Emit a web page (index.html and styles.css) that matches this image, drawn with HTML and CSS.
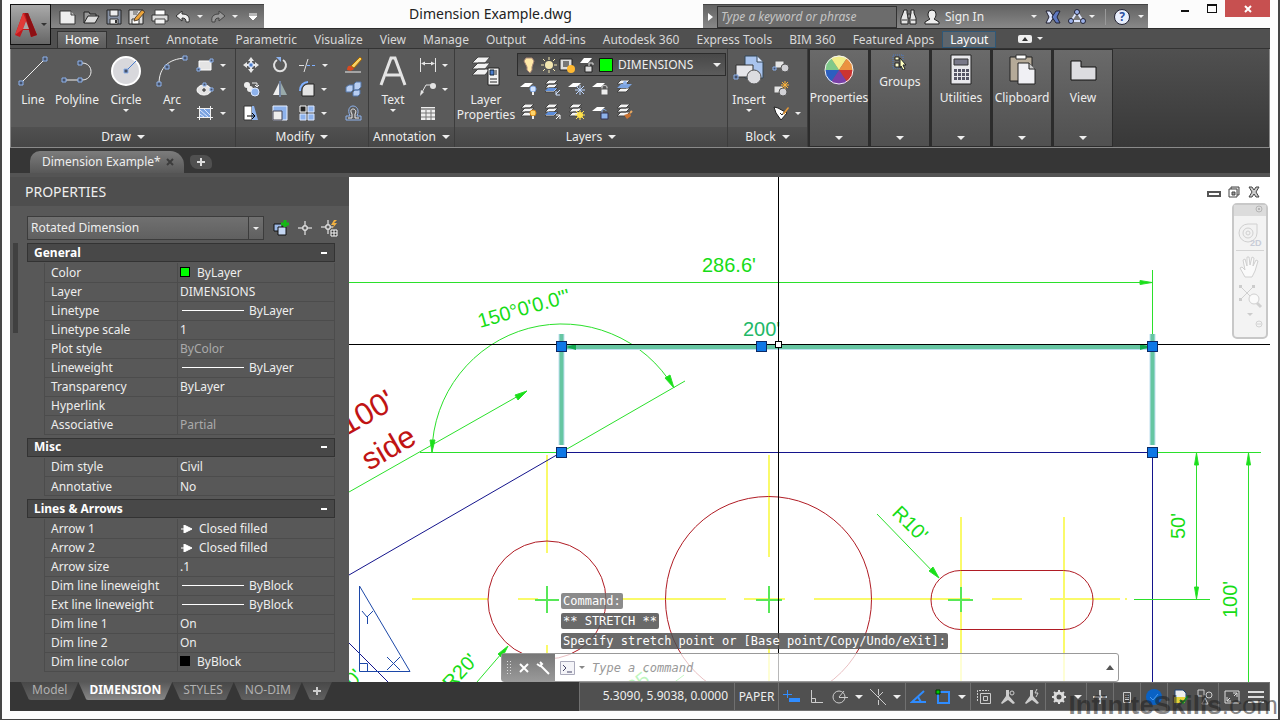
FILE: index.html
```html
<!DOCTYPE html>
<html lang="en">
<head>
    <meta charset="utf-8">
    <title>Dimension Example.dwg</title>
    <link rel="stylesheet" href="styles.css">
</head>
<body>
<div class="window">
    <header class="titlebar">
        <button class="app-button" aria-label="Application menu">
            <svg width="24" height="26" viewBox="0 0 24 26"><path d="M9 1h5l9 22-6 2-2-7H9l-3 7-5-2z" fill="#c2181c"/><path d="M11 1l3 0 9 22-6 2z" fill="#8d1014"/><path d="M9 1L1 23l8-6 3-9z" fill="#e03a38"/><path d="M12 9l3 8H9z" fill="#a9a9a9"/></svg>
            <span class="caret dark"></span>
        </button>
        <div class="quickbar">
            <button aria-label="New"><svg width="18" height="16" viewBox="0 0 18 16"><path d="M1 2h11l4 4v9H1z" fill="#eee" stroke="#333"/><path d="M12 2v4h4" fill="#bbb" stroke="#444"/></svg></button>
            <button aria-label="Open"><svg width="18" height="16" viewBox="0 0 18 16"><path d="M2 14V3h5l1 2h6v3" fill="#999" stroke="#222"/><path d="M2 14l4-7h11l-4 7z" fill="#ddd" stroke="#222"/></svg></button>
            <button aria-label="Save"><svg width="16" height="16" viewBox="0 0 16 16"><path d="M1 1h14v14H1z" fill="#8791a3" stroke="#222"/><path d="M4 1h8v6H4zM4 10h8v5H4z" fill="#eee" stroke="#333"/><path d="M9 11h2v3H9z" fill="#333"/></svg></button>
            <button aria-label="Save as"><svg width="18" height="16" viewBox="0 0 18 16"><path d="M1 1h14v14H1z" fill="#ddd" stroke="#222"/><path d="M4 10h7v5H4z" fill="#fff" stroke="#333"/><path d="M5 3h5M5 5h4" stroke="#555"/><path d="M7 9l7-8 3 2-7 8-4 1z" fill="#eca43a" stroke="#543"/></svg></button>
            <button aria-label="Print"><svg width="18" height="16" viewBox="0 0 18 16"><path d="M4 1h10v6H4z" fill="#fff" stroke="#444"/><path d="M1 6h16v6H1z" fill="#ddd" stroke="#333"/><path d="M4 10h10v5H4z" fill="#f5f5f5" stroke="#444"/></svg></button>
            <button aria-label="Undo"><svg width="16" height="14" viewBox="0 0 16 14"><path d="M7 1v3c6 0 8 3 7 8h-3c0-3-1-4-4-4v3L1 6z" fill="#eee" stroke="#333"/></svg></button>
            <span class="caret"></span>
            <button aria-label="Redo"><svg width="16" height="14" viewBox="0 0 16 14"><path d="M9 1v3C3 4 1 7 2 12h3c0-3 1-4 4-4v3l6-5z" fill="#999" stroke="#444"/></svg></button>
            <span class="caret"></span>
            <button aria-label="Customize"><svg width="10" height="8" viewBox="0 0 10 8"><path d="M1 1h8M1 3h8L5 7z" stroke="#fff" fill="#fff"/></svg></button>
        </div>
        <div class="doc-title">Dimension Example.dwg</div>
        <div class="infocenter">
            <button class="expander" aria-label="Collapse search"><svg width="5" height="8" viewBox="0 0 5 8"><path d="M0 0l5 4-5 4z" fill="#fff"/></svg></button>
            <input type="text" class="search" placeholder="Type a keyword or phrase" aria-label="Search help">
            <button aria-label="Search"><svg width="18" height="16" viewBox="0 0 18 16"><path d="M4 1h3v3l1 4v7H1V9l2-5zM11 1h3v3l2 5v6h-6V8l1-4z" fill="#e6e6e6" stroke="#222"/><path d="M8 5h2v4H8zM2 11h5M11 11h5" stroke="#333" fill="#ccc"/></svg></button>
            <button class="sign-in"><svg width="16" height="16" viewBox="0 0 16 16"><path d="M4 5a4 4 0 0 1 8 0c0 3-1 4-2 5l5 3v2H1v-2l5-3C5 9 4 8 4 5z" fill="#eee" stroke="#222"/></svg>Sign In</button>
            <span class="caret"></span>
            <button class="exchange" aria-label="Exchange apps"><svg width="16" height="14" viewBox="0 0 16 14"><path d="M1 1h4l4 6-4 6H1l3-6z" fill="#dde6ff" stroke="#223"/><path d="M15 1h-4L7 7l4 6h4l-3-6z" fill="#5e78c0" stroke="#223"/></svg></button>
            <button aria-label="Stay connected"><svg width="18" height="15" viewBox="0 0 18 15"><path d="M9 3l6 9H3z" fill="none" stroke="#dde6ff" stroke-width="2"/><circle cx="9" cy="3" r="2.500" fill="#9ab0e8" stroke="#223"/><circle cx="3" cy="12" r="2.500" fill="#9ab0e8" stroke="#223"/><circle cx="15" cy="12" r="2.500" fill="#9ab0e8" stroke="#223"/></svg></button>
            <span class="caret"></span>
            <span class="divider"></span>
            <button class="help" aria-label="Help">?</button>
            <span class="caret"></span>
        </div>
        <div class="window-controls">
            <button aria-label="Minimize"><svg width="10" height="10" viewBox="0 0 10 10"><path d="M1 8h8" stroke="#111" stroke-width="2"/></svg></button>
            <button aria-label="Maximize"><svg width="10" height="9" viewBox="0 0 10 9"><path d="M0 1h10M0 8.500h10M.5 0v9M9.500 0v9" stroke="#111"/><path d="M0 1h10" stroke="#111" stroke-width="2"/></svg></button>
            <button class="close" aria-label="Close"><svg width="8" height="8" viewBox="0 0 8 8"><path d="M1 1l6 6M7 1L1 7" stroke="#fff" stroke-width="2"/></svg></button>
        </div>
    </header>

    <nav class="ribbon-tabs">
        <a href="#" class="active">Home</a>
        <a href="#">Insert</a>
        <a href="#">Annotate</a>
        <a href="#">Parametric</a>
        <a href="#">Visualize</a>
        <a href="#">View</a>
        <a href="#">Manage</a>
        <a href="#">Output</a>
        <a href="#">Add-ins</a>
        <a href="#">Autodesk 360</a>
        <a href="#">Express Tools</a>
        <a href="#">BIM 360</a>
        <a href="#">Featured Apps</a>
        <a href="#" class="context">Layout</a>
        <button class="ribbon-toggle" aria-label="Minimize ribbon"><svg width="14" height="8" viewBox="0 0 14 8"><rect width="14" height="8" rx="2" fill="#eee"/><path d="M4 6l3-4 3 4z" fill="#333"/></svg></button>
        <span class="caret"></span>
    </nav>

    <section class="ribbon">
        <div class="panel">
            <div class="tools draw">
                <button class="big"><svg width="32" height="32" viewBox="0 0 32 32"><path d="M4 28L28 4" stroke="#eee"/><g class="node"><path d="M2 26h4v4H2zM26 2h4v4h-4z"/></g></svg>Line</button>
                <button class="big"><svg width="32" height="32" viewBox="0 0 32 32"><path d="M3 25h18c12 0 12-17 0-17h-1" fill="none" stroke="#eee"/><g class="node"><path d="M1 23h4v4H1zM17 23h4v4h-4zM17 6h4v4h-4z"/></g></svg>Polyline</button>
                <button class="big"><svg width="32" height="32" viewBox="0 0 32 32"><circle cx="16" cy="16" r="14" fill="#d8d8dc" stroke="#fff" stroke-width="2"/><path d="M16 16L26 6" stroke="#4a7ccc"/><path class="node" d="M14 14h4v4h-4z"/></svg>Circle<span class="caret"></span></button>
                <button class="big"><svg width="32" height="32" viewBox="0 0 32 32"><path d="M3 29C3 12 13 4 29 3" fill="none" stroke="#eee"/><g class="node"><path d="M1 27h4v4H1zM9 10h4v4H9zM27 1h4v4h-4z"/></g></svg>Arc<span class="caret"></span></button>
                <div class="stack">
                    <div class="split"><button aria-label="Rectangle"><svg width="18" height="16" viewBox="0 0 18 16"><path d="M3 4h12v9H3z" fill="#e4e4e4" stroke="#fff"/><g class="node"><path d="M1 11h3v3H1zM14 2h3v3h-3z"/></g></svg></button><span class="caret"></span></div>
                    <div class="split"><button aria-label="Ellipse"><svg width="18" height="16" viewBox="0 0 18 16"><ellipse cx="8" cy="9" rx="7" ry="5" fill="#e4e4e4" stroke="#fff"/><path d="M6 9h4M8 7v4" stroke="#222"/><g class="node"><path d="M7 2h3v3H7zM14 7h3v3h-3z"/></g></svg></button><span class="caret"></span></div>
                    <div class="split"><button aria-label="Hatch"><svg width="18" height="16" viewBox="0 0 18 16"><path d="M4 4h10v8H4z" fill="#7ba3e0"/><path d="M4 5l8 7M8 4l6 6M4 9l4 3" stroke="#dce8ff"/><path d="M1 3.500h16M1 12.500h16M3.500 1v14M14.500 1v14" stroke="#f0f0f0"/></svg></button><span class="caret"></span></div>
                </div>
            </div>
            <button class="panel-title">Draw <span class="caret large"></span></button>
        </div>

        <div class="panel">
            <div class="tools modify">
                <div class="stack">
                    <button aria-label="Move"><svg width="16" height="16" viewBox="0 0 16 16"><path d="M8 0l3 4H9v3h3V5l4 3-4 3V9H9v3h2l-3 4-3-4h2V9H4v2L0 8l4-3v2h3V4H5z" fill="#e8e8e8"/><path d="M6 6h4v4H6z" fill="#4a7ccc" stroke="#dce8ff"/></svg></button>
                    <button aria-label="Copy"><svg width="17" height="16" viewBox="0 0 17 16"><circle cx="4" cy="4" r="3" fill="#eee"/><circle cx="7" cy="8" r="3" fill="#eee"/><circle cx="12" cy="11" r="4" fill="#8db2ec" stroke="#dce8ff"/><path d="M9 2h5v4M12 4l2 2 2-2" fill="none" stroke="#eee"/></svg></button>
                    <button aria-label="Stretch"><svg width="16" height="16" viewBox="0 0 16 16"><path d="M1 1h8v14H1z" fill="#fff" stroke="#333"/><path d="M9 1h2l4 14H9z" fill="#8db2ec"/><path d="M4 11h7M9 8l3 3-3 3" stroke="#000" fill="none"/></svg></button>
                </div>
                <div class="stack">
                    <button aria-label="Rotate"><svg width="16" height="16" viewBox="0 0 16 16"><path d="M11 3a6 6 0 1 1-6 0" fill="none" stroke="#e0e0e0" stroke-width="2"/><path d="M4 0h5v5z" fill="#8db2ec"/></svg></button>
                    <button aria-label="Mirror"><svg width="16" height="16" viewBox="0 0 16 16"><path d="M7 2v12H1z" fill="#eee"/><path d="M9 2v12h6z" fill="#9aa"/><path d="M8 0v16" stroke="#8db2ec"/></svg></button>
                    <button aria-label="Scale"><svg width="16" height="16" viewBox="0 0 16 16"><path d="M1 1h14v14H1z" fill="#8db2ec" stroke="#e8f0ff"/><path d="M1 6h9v9H1z" fill="#eee" stroke="#445"/></svg></button>
                </div>
                <div class="stack">
                    <div class="split"><button aria-label="Trim"><svg width="17" height="16" viewBox="0 0 17 16"><path d="M0 8.500h5M5 15L9 2" stroke="#e0e0e0"/><path d="M8 8.500h3M13 8.500h3" stroke="#7fb0ff"/></svg></button><span class="caret"></span></div>
                    <div class="split"><button aria-label="Fillet"><svg width="16" height="16" viewBox="0 0 16 16"><path d="M3 15V9c0-3 3-6 6-6h6v12z" fill="#e4e4e4" stroke="#222"/><path d="M1 10C1 4 5 1 9 1" fill="none" stroke="#7fb0ff" stroke-width="2"/></svg></button><span class="caret"></span></div>
                    <div class="split"><button aria-label="Array"><svg width="16" height="16" viewBox="0 0 16 16"><path d="M1 1h6v6H1z" fill="#222" stroke="#fff"/><path d="M9 1h6v6H9zM1 9h6v6H1zM9 9h6v6H9z" fill="#8db2ec" stroke="#dce8ff"/></svg></button><span class="caret"></span></div>
                </div>
                <div class="stack">
                    <button aria-label="Erase"><svg width="17" height="16" viewBox="0 0 17 16"><path d="M6 9l9-9 2 2-8 9z" fill="#f6d264" stroke="#a60"/><path d="M2 13c0-4 2-5 4-4l3 3c-2 2-4 2-7 1z" fill="#d84a20"/><path d="M0 15h16" stroke="#eee"/></svg></button>
                    <button aria-label="Explode"><svg width="17" height="16" viewBox="0 0 17 16"><path d="M1 6l3-2h4v5l-2 2H1zM9 3l2-2h5v5l-3 3H9zM8 11l2-2h5v4l-2 2H8z" fill="#b8cef2" stroke="#5577a8"/></svg></button>
                    <button aria-label="Offset"><svg width="17" height="16" viewBox="0 0 17 16"><path d="M1 15v-4h4C2 4 5 1 8 1s7 3 4 10h4v4z" fill="none" stroke="#8db2ec"/><path d="M3 13h4V9C5 6 6 4 8 4s4 2 2 5v4h4" fill="none" stroke="#eee"/></svg></button>
                </div>
            </div>
            <button class="panel-title">Modify <span class="caret large"></span></button>
        </div>

        <div class="panel">
            <div class="tools annotation">
                <button class="big"><svg width="32" height="32" viewBox="0 0 32 32"><path d="M4 30L14 3h4l10 27M9 20h14" fill="none" stroke="#e4e4e4" stroke-width="3"/></svg>Text<span class="caret"></span></button>
                <div class="stack">
                    <div class="split"><button aria-label="Linear"><svg width="18" height="16" viewBox="0 0 18 16"><path d="M1.500 1v14M16.500 1v14M3 6.500h12" stroke="#e4e4e4"/><path d="M2 6.500l4-2v4zM16 6.500l-4-2v4z" fill="#e4e4e4"/></svg></button><span class="caret"></span></div>
                    <div class="split"><button aria-label="Leader"><svg width="18" height="16" viewBox="0 0 18 16"><path d="M2 13L7 4h6" fill="none" stroke="#e4e4e4"/><path d="M1 15l1-6 3 2z" fill="#e4e4e4"/><circle cx="14" cy="5" r="3" fill="#e4e4e4"/></svg></button><span class="caret"></span></div>
                    <div class="split"><button aria-label="Table"><svg width="18" height="16" viewBox="0 0 18 16"><path d="M2 2h14v13H2z" fill="#eee"/><path d="M2 4h14" stroke="#999" stroke-width="2"/><path d="M2 8h14M2 12h14M7 5v10M12 5v10" stroke="#777"/></svg></button></div>
                </div>
            </div>
            <button class="panel-title">Annotation <span class="caret large"></span></button>
        </div>

        <div class="panel">
            <div class="tools layers">
                <button class="big"><svg width="32" height="32" viewBox="0 0 32 32"><path d="M8 14h12l-5 6H2zM8 8h12l-5 6H2zM8 2h12l-5 6H2z" fill="#f2f2f2" stroke="#444"/><path d="M18 13h11v17H18z" fill="#f2f2f2" stroke="#222"/><path d="M20 15h4v5h-4z" fill="#4a7ccc" stroke="#123"/><path d="M20 24h7M20 27h7M26 15v5" stroke="#222"/></svg>Layer<br>Properties</button>
                <div class="layer-tools">
                    <div class="layer-combo">
                        <svg width="92" height="18" viewBox="0 0 92 18"><path d="M4 2h6l2 3-2 6v3l-2 3-3-3v-3L2 5z" fill="#ffe9a8" stroke="#a87"/><circle cx="27" cy="9" r="4" fill="#f3e6b0"/><path d="M27 1v3M27 14v3M19 9h3M32 9h3M21 3l2 2M31 13l2 2M33 3l-2 2M21 15l2-2" stroke="#f3e6b0"/><path d="M38 3h12v11H38z" fill="#ddd" stroke="#222"/><path d="M41 5h6v6h-6z" fill="#777"/><circle cx="49" cy="13" r="4" fill="#ffb932"/><path d="M62 2h8l-4 5h-8z" fill="#fff"/><path d="M63 10h7v6h-7z" fill="#ddd" stroke="#222"/><path d="M67 10V7h4v2" fill="none" stroke="#ddd"/><path d="M77.500 2.500h13v13h-13z" fill="#0f0" stroke="#111"/></svg>
                        <select aria-label="Current layer"><option>DIMENSIONS</option></select>
                        <span class="caret large"></span>
                    </div>
                    <div class="layer-grid">
                        <button aria-label="Off"><svg width="18" height="16" viewBox="0 0 18 16"><use href="#sheet"/><circle cx="13" cy="9" r="3" fill="#cfe2ff" stroke="#7ba3e0"/><path d="M13 12v3" stroke="#eee" stroke-width="2"/></svg></button>
                        <button aria-label="Isolate"><svg width="18" height="16" viewBox="0 0 18 16"><use href="#sheets"/><path d="M4 8h9l-3 3H1z" fill="#5d8edb"/><path d="M16 10l-4 4M12 11v4h4" fill="none" stroke="#cfe2ff"/></svg></button>
                        <button aria-label="Freeze"><svg width="18" height="16" viewBox="0 0 18 16"><use href="#sheet"/><path d="M12 5v10M7 10h10M8 6l8 8M16 6l-8 8" stroke="#bcd6ff"/></svg></button>
                        <button aria-label="Lock"><svg width="18" height="16" viewBox="0 0 18 16"><use href="#sheet"/><path d="M10 10V7c0-2 5-2 5 0v3" fill="none" stroke="#ddd"/><path d="M9 9h7v6H9z" fill="#eee" stroke="#555"/></svg></button>
                        <button aria-label="Make current"><svg width="18" height="16" viewBox="0 0 18 16"><use href="#sheets"/><path d="M5 4h11l-4 4H1z" fill="#7ba3e0"/><circle cx="9" cy="3" r="2" fill="#8db2ec"/></svg></button>
                        <button aria-label="Turn all on"><svg width="18" height="16" viewBox="0 0 18 16"><use href="#sheets"/><circle cx="13" cy="9" r="3" fill="#ffd56a" stroke="#d98a1a"/><path d="M13 12v3" stroke="#eee" stroke-width="2"/></svg></button>
                        <button aria-label="Unisolate"><svg width="18" height="16" viewBox="0 0 18 16"><use href="#sheets"/><path d="M4 8h9l-3 3H1z" fill="#5d8edb"/><path d="M12 15l4-4M12 11h4v4" fill="none" stroke="#fff"/></svg></button>
                        <button aria-label="Thaw all"><svg width="18" height="16" viewBox="0 0 18 16"><use href="#sheets"/><circle cx="12" cy="11" r="3" fill="#ffe14a"/><path d="M12 6v10M7 11h10M8 7l8 8M16 7l-8 8" stroke="#ffe14a"/></svg></button>
                        <button aria-label="Unlock"><svg width="18" height="16" viewBox="0 0 18 16"><use href="#sheet"/><path d="M10 10V7c0-2 4-2 4 0" fill="none" stroke="#8db2ec"/><path d="M9 9h7v6H9z" fill="#8db2ec" stroke="#335"/></svg></button>
                        <button aria-label="Match layer"><svg width="18" height="16" viewBox="0 0 18 16"><use href="#sheets"/><path d="M8 11l6-2 1 3-4 3z" fill="#c87232"/><path d="M14 9l2-2" stroke="#e8a860" stroke-width="2"/></svg></button>
                    </div>
                </div>
            </div>
            <button class="panel-title">Layers <span class="caret large"></span></button>
        </div>

        <div class="panel">
            <div class="tools block">
                <button class="big"><svg width="32" height="32" viewBox="0 0 32 32"><path d="M12 1h12l6 6v16H12z" fill="#a9c4ee" stroke="#345"/><path d="M24 1v6h6" fill="#dce8ff" stroke="#345"/><path d="M3 10h17v12H3z" fill="#e6e6ea" stroke="#333"/><circle cx="21" cy="22" r="7" fill="#dcdce0" stroke="#555"/><path class="node" d="M1 20h4v4H1z"/></svg>Insert<span class="caret"></span></button>
                <div class="stack">
                    <div class="split"><button aria-label="Create block"><svg width="18" height="16" viewBox="0 0 18 16"><path d="M3 4h9v7H3z" fill="#e4e4e4" stroke="#555"/><circle cx="13" cy="11" r="4" fill="#d0d0d4" stroke="#555"/><path class="node" d="M1 10h3v3H1z"/></svg></button></div>
                    <div class="split"><button aria-label="Edit block"><svg width="18" height="16" viewBox="0 0 18 16"><path d="M2 5h9v7H2z" fill="#e4e4e4" stroke="#555"/><circle cx="11" cy="11" r="4" fill="#d0d0d4" stroke="#555"/><path d="M13 0v8M9 4h8M10 1l6 6M16 1l-6 6" stroke="#ffb53a"/></svg></button></div>
                    <div class="split"><button aria-label="Edit attributes"><svg width="18" height="16" viewBox="0 0 18 16"><path d="M2 2l4 1 9 5-6 7-5-7z" fill="#fff" stroke="#222"/><path d="M8 8l2 2 3-4" fill="none" stroke="#222"/><path d="M11 8l5-6 1 1-5 7z" fill="#e59a3a"/></svg></button><span class="caret"></span></div>
                </div>
            </div>
            <button class="panel-title">Block <span class="caret large"></span></button>
        </div>

        <button class="collapsed"><svg width="32" height="32" viewBox="0 0 32 32"><path d="M16 16L2 16A14 14 0 0 1 8 4z" fill="#7fc98a"/><path d="M16 16L8 4A14 14 0 0 1 24 4z" fill="#f2ee8a"/><path d="M16 16L24 4A14 14 0 0 1 30 16z" fill="#eb9240"/><path d="M16 16H30A14 14 0 0 1 24 28z" fill="#cc3430"/><path d="M16 16L24 28A14 14 0 0 1 8 28z" fill="#7a3fa8"/><path d="M16 16L8 28A14 14 0 0 1 2 16z" fill="#2c5fc0"/><circle cx="16" cy="16" r="14" fill="none" stroke="#f4f4f4"/></svg>Properties<span class="caret large"></span></button>
        <button class="collapsed"><svg width="16" height="16" viewBox="0 0 16 16"><path d="M1 1h10v13H1z" fill="none" stroke="#4a7ccc" stroke-dasharray="1 1"/><path d="M3 3h4v3H3zM3 9h4v4H3z" fill="#ffffd0" stroke="#222"/><path d="M8 4l6 7h-3l2 4-2 1-2-4-1 2z" fill="#ffffc0" stroke="#222"/></svg>Groups<span class="caret large"></span></button>
        <button class="collapsed"><svg width="32" height="32" viewBox="0 0 32 32"><path d="M6 1h20v29H6z" fill="#e8e8ec" stroke="#222"/><path d="M9 5h14v6H9z" fill="#778" stroke="#333"/><g fill="#556"><path d="M9 15h3v3H9zM13 15h3v3h-3zM17 15h3v3h-3zM21 15h3v3h-3zM9 19h3v3H9zM13 19h3v3h-3zM17 19h3v3h-3zM21 19h3v3h-3zM9 23h3v3H9zM13 23h3v3h-3zM17 23h3v3h-3zM21 23h3v3h-3z"/></g></svg>Utilities<span class="caret large"></span></button>
        <button class="collapsed"><svg width="32" height="32" viewBox="0 0 32 32"><path d="M4 3h22v24H4z" fill="#b5aa98" stroke="#222"/><path d="M10 1h10v4H10z" fill="#fff" stroke="#333"/><path d="M12 9h11l6 6v15H12z" fill="#f0f0f4" stroke="#222"/><path d="M23 9v6h6" fill="#ccc" stroke="#222"/></svg>Clipboard<span class="caret large"></span></button>
        <button class="collapsed"><svg width="32" height="32" viewBox="0 0 32 32"><path d="M4 7h10v6h15v13H4z" fill="#dcdce0" stroke="#111"/></svg>View<span class="caret large"></span></button>
    </section>

    <div class="file-tabs">
        <a href="#" class="file-tab">Dimension Example* <svg width="8" height="8" viewBox="0 0 8 8"><path d="M1 1l6 6M7 1L1 7" stroke="#3c3c3c" stroke-width="2"/></svg></a>
        <button class="new-tab" aria-label="New drawing"><svg width="8" height="8" viewBox="0 0 8 8"><path d="M4 0v8M0 4h8" stroke="#ddd" stroke-width="2"/></svg></button>
    </div>

    <main class="workspace">
        <aside class="palette">
            <h2>PROPERTIES</h2>
            <div class="selector">
                <div class="combo">
                    <select aria-label="Object type"><option>Rotated Dimension</option></select>
                    <span class="caret"></span>
                </div>
                <button aria-label="Toggle PICKADD"><svg width="16" height="16" viewBox="0 0 16 16"><path d="M1 4h8v7H1z" fill="#9db9e6" stroke="#111"/><path d="M5 7h8v8H5z" fill="#c4d6f2" stroke="#111"/><path d="M12 0v7M8 4h8" stroke="#14b814" stroke-width="3"/></svg></button>
                <button aria-label="Select objects"><svg width="14" height="14" viewBox="0 0 14 14"><path d="M7 0v5M7 9v5M0 7h5M9 7h5M5 5h4v4H5z" fill="none" stroke="#fff"/></svg></button>
                <button aria-label="Quick select"><svg width="17" height="17" viewBox="0 0 17 17"><path d="M7 0v5M7 9v5M0 7h5M9 7h3M5 5h4v4H5z" fill="none" stroke="#fff"/><path d="M13 0l-3 5h3l-2 4 5-6h-3l3-3z" fill="#f0b040"/><path d="M10 10h6v6h-6zM10 13h6M13 10v6" fill="#333" stroke="#fff"/></svg></button>
            </div>
            <div class="groups">
                <button class="group-title">General<span class="minus"></span></button>
                <table>
                    <tr><th>Color</th><td><i class="swatch green"></i>ByLayer</td></tr>
                    <tr><th>Layer</th><td>DIMENSIONS</td></tr>
                    <tr><th>Linetype</th><td><i class="line"></i>ByLayer</td></tr>
                    <tr><th>Linetype scale</th><td>1</td></tr>
                    <tr><th>Plot style</th><td class="dim">ByColor</td></tr>
                    <tr><th>Lineweight</th><td><i class="line"></i>ByLayer</td></tr>
                    <tr><th>Transparency</th><td>ByLayer</td></tr>
                    <tr><th>Hyperlink</th><td></td></tr>
                    <tr><th>Associative</th><td class="dim">Partial</td></tr>
                </table>
                <button class="group-title">Misc<span class="minus"></span></button>
                <table>
                    <tr><th>Dim style</th><td>Civil</td></tr>
                    <tr><th>Annotative</th><td>No</td></tr>
                </table>
                <button class="group-title">Lines &amp; Arrows<span class="minus"></span></button>
                <table>
                    <tr><th>Arrow 1</th><td><svg class="arrow" width="12" height="8" viewBox="0 0 12 8"><path d="M0 4h3M3 0l8 4-8 4z" fill="#fff" stroke="#fff"/></svg>Closed filled</td></tr>
                    <tr><th>Arrow 2</th><td><svg class="arrow" width="12" height="8" viewBox="0 0 12 8"><path d="M0 4h3M3 0l8 4-8 4z" fill="#fff" stroke="#fff"/></svg>Closed filled</td></tr>
                    <tr><th>Arrow size</th><td>.1</td></tr>
                    <tr><th>Dim line lineweight</th><td><i class="line"></i>ByBlock</td></tr>
                    <tr><th>Ext line lineweight</th><td><i class="line"></i>ByBlock</td></tr>
                    <tr><th>Dim line 1</th><td>On</td></tr>
                    <tr><th>Dim line 2</th><td>On</td></tr>
                    <tr><th>Dim line color</th><td><i class="swatch black"></i>ByBlock</td></tr>
                </table>
                <span class="scroll-thumb"></span>
            </div>
        </aside>

        <div class="canvas">
            <svg class="drawing" viewBox="349 177 921 505" preserveAspectRatio="xMinYMin slice">
                <!-- centre lines -->
                <path class="center" d="M547 455v98M547 645v37M769 455v102M769 645v37M961 517v165M1064 517v165M412 599h76M518 599h20M622 599h104M744 599h41M814 599h156M992 599h30M1050 599h70M1125 599h2"/>
                <!-- part outline -->
                <path class="outline" d="M349 575L561 452.500H1152.500V682M349 643l39 39"/>
                <g class="hole">
                    <circle cx="547" cy="600" r="59"/>
                    <circle cx="768.500" cy="599.500" r="103"/>
                    <rect x="931" y="570.500" width="162" height="59" rx="29.500"/>
                </g>
                <!-- dimensions -->
                <g class="dimension">
                    <path d="M349 282.500H1152M1152.500 270v70M432 452A130 130 0 0 1 674 388M567 449L685 381M349 492L527 391M420 452.500H560M1158 452.500h103M1196.500 453v146M1134 599.500h76M1248.500 453v229M877 514l62 64M477 682l31-36M684 675l-16 12"/>
                    <path class="mark" d="M535 600h24M547 586v27M756 600h26M769 586v27M948 600h25M961 587v25"/>
                    <path class="head" d="M1152 282.500l-12-2v4zM432 452l-2-12h5zM674 388l-9-10 5-3zM527 391l-12 4 3 5zM1196.500 453l-2 12h4zM1196.500 599l-2-12h4zM1248.500 453l-2 12h4zM939 578l-10-7 4-4zM508 646l-10 8 4 4z"/>
                </g>
                <g class="dim-text">
                    <text x="702" y="272">286.6'</text>
                    <text transform="translate(480 328) rotate(-16)">150°0'0.0"'</text>
                    <text transform="translate(891 514) rotate(45)">R10'</text>
                    <text transform="translate(1185 539) rotate(-90)">50'</text>
                    <text transform="translate(1237 618) rotate(-90)">100'</text>
                    <text transform="translate(451 691) rotate(-47)">R20'</text>
                    <text transform="translate(622 704) rotate(-38)">R25'</text>
                    <text transform="translate(346 696) rotate(-47)">70'</text>
                    <text class="selected" x="743" y="336">200'</text>
                </g>
                <g class="note">
                    <text transform="translate(397 407) rotate(-30)" text-anchor="end">100'</text>
                    <text transform="translate(369 471) rotate(-30)">side</text>
                </g>
                <!-- selected dimension -->
                <path class="glow" d="M561.500 334v111M1152.500 334v111M566 347H1150"/>
                <path class="glow-core" d="M561.500 334v111M1152.500 334v111M566 347H1150"/>
                <path d="M566 347l10-3v6zM1150 347l-10-3v6z" fill="#12a850"/>
                <!-- ucs icon -->
                <path class="ucs" d="M359.500 586v85.500H410zM359.500 663.500h8v8M362 611l5 6 6-6M367.500 617v7M387 657l13 13M400 657l-13 13"/>
                <path d="M349 344.500H1270M778.500 177V682" stroke="#000"/>
                <g class="grip">
                    <rect x="556.500" y="341.500" width="10" height="10"/>
                    <rect x="756.500" y="341.500" width="10" height="10"/>
                    <rect x="1147.500" y="341.500" width="10" height="10"/>
                    <rect x="556.500" y="447.500" width="10" height="10"/>
                    <rect x="1147.500" y="447.500" width="10" height="10"/>
                </g>
                <rect x="775.500" y="341.500" width="6" height="6" fill="#fff" stroke="#000"/>
            </svg>

            <div class="view-controls">
                <button aria-label="Minimize view"><svg width="14" height="12" viewBox="0 0 14 12"><path d="M1 6h12v4H1z" fill="#fff" stroke="#555" stroke-width="2"/></svg></button>
                <button aria-label="Restore view"><svg width="14" height="12" viewBox="0 0 14 12"><path d="M4 1h8v8H4z" fill="#ddd" stroke="#444"/><path d="M2 3h8v8H2z" fill="#fff" stroke="#444"/><path d="M5 6h3v3H5z" fill="#999" stroke="#444"/></svg></button>
                <button aria-label="Close view"><svg width="14" height="12" viewBox="0 0 14 12"><path d="M2 1h3l2 3 2-3h3L9 6l3 5H9L7 8l-2 3H2l3-5z" fill="#ccc" stroke="#444"/></svg></button>
            </div>

            <div class="navbar">
                <div class="navbar-head"><svg width="8" height="8" viewBox="0 0 8 8"><circle cx="4" cy="4" r="3" fill="none" stroke="#b5b5b5"/><path d="M3 3l2 2M5 3L3 5" stroke="#b5b5b5"/></svg></div>
                <button aria-label="Steering wheel"><svg width="26" height="26" viewBox="0 0 26 26"><path d="M11 2h9v9a9 9 0 1 1-9-9z" fill="#f2f2f2" stroke="#d0d0d0"/><circle cx="11" cy="11" r="5" fill="none" stroke="#d0d0d0"/><circle cx="11" cy="11" r="2" fill="none" stroke="#d0d0d0"/><text x="13" y="24" class="tag">2D</text></svg></button>
                <hr>
                <button aria-label="Pan"><svg width="26" height="24" viewBox="0 0 26 24"><path d="M8 22L3 13l2-1 3 3-2-10 2-1 2 7V2h2l1 8 2-8 2 1-1 8 3-6 2 1-3 10-3 6z" fill="#fafafa" stroke="#d0d0d0"/></svg></button>
                <button aria-label="Zoom"><svg width="26" height="26" viewBox="0 0 26 26"><path d="M3 3l14 14M17 3L3 17" stroke="#d0d0d0"/><path d="M2 2h3v3H2zM15 2h3v3h-3zM2 15h3v3H2z" fill="#ccc"/><circle cx="17" cy="16" r="5" fill="#fafafa" stroke="#d0d0d0"/><path d="M20 20l4 4" stroke="#d0d0d0" stroke-width="3"/></svg></button>
                <span class="caret faint"></span>
                <svg class="navbar-foot" width="8" height="8" viewBox="0 0 8 8"><circle cx="4" cy="4" r="3" fill="none" stroke="#d2d2d2"/><path d="M2 4h4" stroke="#d2d2d2"/></svg>
            </div>

            <div class="command">
                <p>Command:</p>
                <p>** STRETCH **</p>
                <p>Specify stretch point or [Base point/Copy/Undo/eXit]:</p>
                <div class="command-line">
                    <div class="command-handle">
                        <span class="dots"></span>
                        <button aria-label="Close command line"><svg width="10" height="10" viewBox="0 0 10 10"><path d="M1 1l8 8M9 1L1 9" stroke="#fff" stroke-width="2"/></svg></button>
                        <button aria-label="Customize"><svg width="14" height="14" viewBox="0 0 14 14"><path d="M1 3l3 2 2-2-2-2M5 5l8 8" stroke="#fff" stroke-width="2" fill="none"/></svg></button>
                    </div>
                    <svg class="prompt" width="16" height="14" viewBox="0 0 16 14"><path d="M.5 .5h14v13H.5z" fill="#f4f4f8" stroke="#aab"/><path d="M3 4l3 3-3 3M7 11h5" fill="none" stroke="#446"/></svg>
                    <span class="caret gray"></span>
                    <input type="text" placeholder="Type a command" aria-label="Command">
                    <button class="history" aria-label="History"><svg width="8" height="5" viewBox="0 0 8 5"><path d="M0 5l4-5 4 5z" fill="#555"/></svg></button>
                </div>
            </div>
        </div>
    </main>

    <footer class="bottombar">
        <nav class="layout-tabs">
            <a href="#">Model</a>
            <a href="#" class="current">DIMENSION</a>
            <a href="#">STYLES</a>
            <a href="#">NO-DIM</a>
            <button aria-label="New layout"><svg width="8" height="8" viewBox="0 0 8 8"><path d="M4 0v8M0 4h8" stroke="#ccc" stroke-width="2"/></svg></button>
        </nav>
        <div class="status">
            <span class="coords">5.3090, 5.9038, 0.0000</span>
            <button class="space">PAPER</button>
            <div class="toggles">
                <button aria-label="Snap"><svg width="18" height="16" viewBox="0 0 18 16"><path d="M4.500 1v8M0 5.500h9" stroke="#2f8cff"/><path d="M6 9h11v4H6z" fill="#2f8cff"/></svg></button>
                <button aria-label="Ortho"><svg width="16" height="16" viewBox="0 0 16 16"><path d="M3.500 1v12.500H15M3 9.500h4.500v4" fill="none" stroke="#ccc"/></svg></button>
                <button aria-label="Polar"><svg width="18" height="16" viewBox="0 0 18 16"><circle cx="8" cy="8" r="6" fill="none" stroke="#ccc"/><path d="M8 8.500h9M8 8l5-6" stroke="#ccc"/></svg></button>
                <span class="caret"></span>
                <button aria-label="Isodraft"><svg width="18" height="18" viewBox="0 0 18 18"><path d="M1 1l16 16M9.500 1v6M14 4l-5 5M9.500 12v5" stroke="#ccc"/></svg></button>
                <span class="caret"></span>
            </div>
            <div class="toggles">
                <button aria-label="Object snap tracking"><svg width="18" height="16" viewBox="0 0 18 16"><path d="M14 2L2 13h14M8 8l3 5" fill="none" stroke="#2f8cff" stroke-width="2"/></svg></button>
                <button aria-label="Object snap"><svg width="16" height="16" viewBox="0 0 16 16"><path d="M3 3h11v11H3z" fill="none" stroke="#2f8cff" stroke-width="2"/><path d="M1 1h4v4H1z" fill="#0c0" stroke="#030"/></svg></button>
                <span class="caret"></span>
            </div>
            <div class="toggles">
                <button aria-label="Selection cycling"><svg width="16" height="16" viewBox="0 0 16 16"><path d="M1.500 12V1.500H13" fill="none" stroke="#ccc" stroke-dasharray="2 1"/><path d="M4.500 4.500h10v10h-10zM7.500 7.500h4v4h-4z" fill="none" stroke="#ccc"/></svg></button>
                <button aria-label="Annotation visibility"><svg width="16" height="16" viewBox="0 0 16 16"><path d="M6 1h3v6l6 7-2 1-5-4-6 4-1-1 5-7z" fill="#ccc"/><circle cx="12" cy="4" r="2" fill="#505050" stroke="#ccc"/></svg></button>
                <button aria-label="Autoscale"><svg width="16" height="16" viewBox="0 0 16 16"><path d="M6 1h3v6l6 7-2 1-5-4-6 4-1-1 5-7z" fill="#ccc"/><path d="M13 0l-2 4h3l-2 4" fill="none" stroke="#ccc"/></svg></button>
            </div>
            <div class="toggles">
                <button aria-label="Workspace"><svg width="14" height="14" viewBox="0 0 14 14"><circle cx="7" cy="7" r="4" fill="none" stroke="#ddd" stroke-width="3"/><path d="M7 0v3M7 11v3M0 7h3M11 7h3M2 2l2 2M10 10l2 2M12 2l-2 2M2 12l2-2" stroke="#ddd" stroke-width="2"/></svg></button>
                <span class="caret"></span>
            </div>
            <div class="toggles">
                <button aria-label="Annotation monitor"><svg width="14" height="14" viewBox="0 0 14 14"><path d="M7 0v14M0 7h14" stroke="#ccc" stroke-width="2"/></svg></button>
            </div>
            <div class="toggles">
                <button aria-label="Quick properties"><svg width="12" height="14" viewBox="0 0 12 14"><path d="M2.500 2.500h7v10h-7zM4 5.500h4M4 7.500h4M4 9.500h4" fill="none" stroke="#ccc"/></svg></button>
            </div>
            <div class="toggles">
                <button aria-label="Graphics performance"><svg width="18" height="18" viewBox="0 0 18 18"><circle cx="9" cy="9" r="8" fill="#0a62c4"/><path d="M5 9l3 3 5-6" fill="none" stroke="#4a9af0" stroke-width="1"/></svg></button>
            </div>
            <div class="toggles">
                <button aria-label="Trusted file"><svg width="16" height="16" viewBox="0 0 16 16"><path d="M2 1h8l3 3v6H2z" fill="#eee" stroke="#247"/><path d="M1 8h11v6H1z" fill="#e8d23a"/><path d="M7 11l3 3 5-7" fill="none" stroke="#1a8a2a" stroke-width="2"/></svg></button>
                <button aria-label="Isolate objects"><svg width="16" height="16" viewBox="0 0 16 16"><path d="M1 1h6v6H1zM5 15l3-6 3 6z" fill="none" stroke="#ccc"/><circle cx="12" cy="6" r="3" fill="none" stroke="#ccc"/></svg></button>
            </div>
            <div class="toggles">
                <button aria-label="Clean screen"><svg width="16" height="14" viewBox="0 0 16 14"><path d="M1 1h14v12H1z" fill="none" stroke="#ddd"/><path d="M3 11l3-3M3 7v4h4M13 3l-3 3M9 3h4v4" fill="none" stroke="#ddd"/></svg></button>
                <button aria-label="Customization"><svg width="16" height="14" viewBox="0 0 16 14"><path d="M0 2h16M0 7h16M0 12h16" stroke="#ddd" stroke-width="2"/></svg></button>
            </div>
        </div>
    </footer>
    <div class="watermark"><b>InfiniteSkills</b>.com</div>
</div>

<svg class="defs" aria-hidden="true">
    <symbol id="sheet" viewBox="0 0 18 16"><path d="M5 3h8l-4 4H0z" fill="#fff"/></symbol>
    <symbol id="sheets" viewBox="0 0 18 16"><path d="M5 8h9l-4 4H1zM5 4h9l-4 4H1zM5 0h9l-4 4H1z" fill="#f4f4f4" stroke="#444"/></symbol>
</svg>
</body>
</html>
```

FILE: styles.css
```css
* {
    box-sizing: border-box;
}

body {
    margin: 0;
    font-family: "Noto Sans", "Open Sans", sans-serif;
    font-size: 12px;
    line-height: 16px;
    color: #eee;
    background: #444;
}

button, input, select {
    margin: 0;
    padding: 0;
    border: 0;
    background: none;
    color: inherit;
    font: inherit;
}

button {
    display: flex;
    align-items: center;
    justify-content: center;
}

a {
    color: inherit;
    text-decoration: none;
}

select {
    appearance: none;
}

svg {
    flex: none;
}

.defs {
    position: absolute;
    width: 0;
    height: 0;
}

.node {
    fill: #46526a;
    stroke: #8db2ec;
}

.caret {
    flex: none;
    border: 3px solid transparent;
    border-top-color: #eee;
    border-bottom: 0;
}

.caret.large {
    border-width: 4px;
    border-bottom: 0;
}

.caret.dark { border-top-color: #333; }
.caret.gray { border-top-color: #888; }
.caret.faint { border-top-color: #ccc; }

.window {
    position: relative;
    display: flex;
    flex-direction: column;
    height: 100vh;
    padding: 0 8px 8px;
    border: solid #444;
    border-width: 0 2px 1px;
    background: #fcfcfc;
    overflow: hidden;
}

/* title bar */
.titlebar {
    position: relative;
    display: flex;
    align-items: flex-end;
    height: 28px;
    padding-left: 41px;
}

.app-button {
    position: absolute;
    left: 0;
    top: 4px;
    z-index: 2;
    gap: 3px;
    width: 41px;
    height: 41px;
    border: 1px solid #111;
    background: linear-gradient(#aaa, #666);
}

.quickbar, .infocenter {
    display: flex;
    align-items: center;
    height: 24px;
    border-top: 1px solid #444;
    background: linear-gradient(#626262, #888);
}

.quickbar {
    width: 213px;
    padding-left: 5px;
}

.quickbar button {
    width: 24px;
}

.quickbar .caret {
    margin: 0 3px;
}

.doc-title {
    flex: 1;
    align-self: center;
    padding-left: 14px;
    text-align: center;
    font-size: 14px;
    color: #222;
}

.infocenter {
    width: 445px;
}

.infocenter button {
    width: 24px;
}

.infocenter .expander {
    width: 14px;
    height: 23px;
}

.infocenter .search {
    width: 180px;
    height: 22px;
    padding: 0 3px;
    border: 1px solid #333;
    background: #6c6c6c;
    font-style: italic;
}

.search::placeholder {
    color: #c4c4c4;
}

.infocenter .sign-in {
    gap: 5px;
    width: 110px;
    padding-left: 3px;
    justify-content: flex-start;
}

.infocenter .exchange {
    margin-left: 4px;
}

.infocenter .help {
    width: 16px;
    height: 16px;
    margin: 0 8px;
    border: 1px solid #223;
    border-radius: 50%;
    background: #e8eefc;
    color: #2a4fa0;
    font-weight: bold;
}

.divider {
    width: 1px;
    height: 16px;
    margin-left: 10px;
    background: #999;
}

.window-controls {
    display: flex;
    align-self: flex-start;
    width: 122px;
    justify-content: flex-end;
}

.window-controls button {
    width: 27px;
    height: 16px;
}

.window-controls .close {
    width: 45px;
    height: 17px;
    background: #c75050;
}

/* ribbon */
.ribbon-tabs {
    display: flex;
    align-items: flex-end;
    height: 21px;
    padding-left: 47px;
    border-top: 1px solid #2c2c2c;
    border-bottom: 1px solid #333;
    background: #505050;
    color: #d8d8d8;
    white-space: nowrap;
}

.ribbon-tabs a {
    padding: 0 8px 0 9px;
    border: 1px solid transparent;
    border-width: 1px 0 0;
}

.ribbon-tabs .active {
    padding: 0 7px;
    border: solid #333;
    border-width: 1px 1px 0;
    background: linear-gradient(#707070, #5c5c5c);
    color: #fff;
}

.ribbon-tabs .context {
    padding: 0 7px;
    border: 1px solid #2f5877;
    background: #5d656c;
    color: #fff;
    line-height: 15px;
}

.ribbon-toggle {
    margin: 0 5px 0 22px;
}

.ribbon-tabs .caret,
.ribbon-toggle {
    align-self: center;
}

.ribbon {
    display: flex;
    height: 99px;
    border: solid #8a8a8a;
    border-width: 0 1px 1px;
    background: linear-gradient(#505050, #383838);
}

.panel {
    display: flex;
    flex-direction: column;
    border-right: 1px solid #3c3c3c;
    background: #5a5a5a;
}

.panel-title {
    gap: 6px;
    height: 20px;
    background: linear-gradient(#505050, #464646);
}

.tools {
    display: grid;
    height: 78px;
    padding-top: 4px;
    align-items: start;
}

.draw { grid-template-columns: 44px 44px 54px 38px 44px; }
.modify { grid-template-columns: 30px 28px 44px 30px; }
.annotation { grid-template-columns: 48px 37px; }
.layers { grid-template-columns: 62px 210px; }
.block { grid-template-columns: 42px 37px; }

.big {
    flex-direction: column;
    justify-content: flex-start;
    padding-top: 2px;
    line-height: 15px;
}

.big svg {
    margin-bottom: 5px;
}

.big .caret {
    margin-top: 2px;
}

.stack {
    display: grid;
    grid-auto-rows: 24px;
}

.split {
    display: flex;
    align-items: center;
    gap: 6px;
    padding-left: 5px;
}

.annotation .split,
.block .split {
    gap: 5px;
    padding-left: 2px;
}

.layer-combo {
    position: relative;
    display: flex;
    align-items: center;
    width: 209px;
    height: 23px;
    padding: 0 4px;
    border: 1px solid #2c2c2c;
    background: linear-gradient(#484848, #5c5c5c);
}

.layer-combo select {
    flex: 1;
    padding-left: 4px;
}

.layer-grid {
    display: grid;
    grid-template-columns: repeat(5, 24px);
    grid-auto-rows: 24px;
}

.collapsed {
    flex-direction: column;
    justify-content: flex-start;
    width: 61px;
    height: 98px;
    padding: 4px 0 6px;
    border: 1px solid #2c2c2c;
    border-left-width: 2px;
    background: linear-gradient(#6a6a6a, #505050);
}

.collapsed svg {
    margin-bottom: 4px;
}

.collapsed .caret {
    margin-top: auto;
}

.file-tabs {
    display: flex;
    align-items: flex-end;
    gap: 6px;
    height: 29px;
    padding-left: 20px;
    border-bottom: 4px solid #545454;
    background: #363636;
}

.file-tab {
    display: flex;
    align-items: center;
    gap: 5px;
    height: 22px;
    padding: 0 10px 0 12px;
    border-radius: 10px 14px 0 0;
    background: linear-gradient(#7c7c7c, #585858);
}

.new-tab {
    align-self: flex-end;
    width: 22px;
    height: 14px;
    margin-bottom: 4px;
    border-radius: 4px 8px 4px 8px;
    background: #505050;
}

/* properties palette */
.workspace {
    display: flex;
    flex: 1;
    min-height: 0;
}

.palette {
    width: 339px;
    background: #585858;
    overflow: hidden;
}

.palette h2 {
    margin: 0;
    padding: 1px 0 0 15px;
    background: #4e4e4e;
    font-size: 14px;
    font-weight: normal;
    line-height: 28px;
}

.selector {
    display: flex;
    align-items: center;
    gap: 9px;
    padding: 10px 10px 3px 17px;
}

.combo {
    display: flex;
    align-items: center;
    width: 237px;
    height: 24px;
    padding-right: 4px;
    border: 1px solid #3c3c3c;
    background: linear-gradient(#707070, #606060);
}

.combo select {
    flex: 1;
    height: 22px;
    margin-right: 4px;
    padding-left: 3px;
    border-right: 1px solid #3c3c3c;
}

.groups {
    position: relative;
    padding: 0 14px 0 17px;
}

.group-title {
    justify-content: space-between;
    width: 100%;
    height: 19px;
    padding: 0 7px 0 6px;
    border: 1px solid #333;
    background: #484848;
    color: #fff;
    font-weight: bold;
}

.minus {
    width: 6px;
    height: 2px;
    background: #fff;
}

.groups table {
    width: 291px;
    margin: 1px 0 3px 17px;
    border-collapse: collapse;
    table-layout: fixed;
}

.groups th,
.groups td {
    height: 19px;
    padding: 0 0 0 6px;
    border: solid #4c4c4c;
    border-width: 0 0 1px 1px;
    font-weight: normal;
    text-align: left;
    line-height: 17px;
    white-space: nowrap;
}

.groups td {
    padding-left: 2px;
    border-right: 1px solid #4c4c4c;
}

.groups th {
    width: 133px;
}

.groups .dim {
    color: #aaa;
}

.swatch {
    display: inline-block;
    width: 10px;
    height: 10px;
    margin-right: 7px;
    border: 1px solid #000;
}

.swatch.green { background: #0f0; }
.swatch.black { background: #000; }

.line {
    display: inline-block;
    width: 62px;
    height: 1px;
    margin: 0 5px 4px 2px;
    background: #fff;
}

.arrow {
    margin: 0 6px 0 1px;
}

.scroll-thumb {
    position: absolute;
    left: 3px;
    top: 0;
    width: 5px;
    height: 90px;
    background: #404040;
}

/* drawing area */
.canvas {
    position: relative;
    flex: 1;
    background: #fff;
    overflow: hidden;
}

.drawing {
    display: block;
    width: 100%;
    height: 100%;
    font-family: "Liberation Sans", Arial, sans-serif;
}

.center { stroke: #fafa6a; stroke-width: 2; }
.outline { fill: none; stroke: #14148c; }
.hole { fill: none; stroke: #b01c24; }
.dimension { fill: none; stroke: #2be02b; }
.dimension .mark { stroke: #58e858; stroke-width: 2; }
.dimension .head { fill: #18e018; }

.dim-text {
    fill: #16dc16;
    font-size: 20px;
}

.dim-text .selected {
    fill: #22b868;
}

.note {
    fill: #c01414;
    font-size: 31px;
}

.glow { stroke: #bfe0f0; stroke-width: 6; }
.glow-core { stroke: #66c6a2; stroke-width: 4; }
.ucs { fill: none; stroke: #1c48a8; }
.grip { fill: #0f78e6; stroke: #0c2a66; }

.view-controls {
    position: absolute;
    top: 9px;
    right: 9px;
    display: flex;
    gap: 6px;
}

.navbar {
    position: absolute;
    top: 26px;
    right: 2px;
    display: flex;
    flex-direction: column;
    align-items: center;
    width: 36px;
    height: 136px;
    border: 2px solid #c8c8c8;
    border-radius: 5px;
    background: #f3f3f3;
}

.navbar-head {
    width: 100%;
    height: 11px;
    padding-right: 3px;
    background: #dcdcdc;
    text-align: right;
    line-height: 8px;
}

.navbar button {
    margin-top: 6px;
}

.navbar hr {
    width: 28px;
    margin: 2px 0 0;
    border: 0;
    border-top: 1px solid #d4d4d4;
}

.navbar hr ~ button {
    margin-top: 4px;
}

.navbar .caret {
    margin-top: 4px;
}

.navbar-foot {
    align-self: flex-end;
    margin: 4px 3px 0 0;
}

.tag {
    fill: #c8ccd8;
    font: bold 9px "Liberation Sans", sans-serif;
}

.command {
    position: absolute;
    left: 152px;
    right: 151px;
    bottom: 0;
    display: flex;
    flex-direction: column;
    align-items: flex-start;
    gap: 4px;
    font-family: "DejaVu Sans Mono", monospace;
}

.command p {
    margin: 0 0 0 60px;
    padding: 0 2px;
    border-radius: 2px;
    background: rgba(80, 80, 80, 0.85);
    color: #fff;
}

.command p:first-child {
    background: rgba(110, 110, 110, 0.8);
}

.command-line {
    display: flex;
    align-items: center;
    width: 100%;
    height: 29px;
    border: 1px solid #999;
    border-radius: 3px;
    background: rgba(255, 255, 255, 0.72);
}

.command-handle {
    display: flex;
    align-items: center;
    justify-content: space-between;
    width: 53px;
    height: 27px;
    padding: 0 5px 0 4px;
    background: linear-gradient(#777, #999);
}

.dots {
    width: 6px;
    height: 16px;
    background: radial-gradient(#ddd 1px, transparent 1px) 0 0 / 3px 3px;
}

.prompt {
    margin: 0 3px 0 5px;
}

.command-line input {
    flex: 1;
    margin-left: 7px;
    color: #444;
    font-style: italic;
}

.command-line input::placeholder {
    color: #999;
}

.history {
    width: 16px;
}

/* bottom bar */
.bottombar {
    display: flex;
    justify-content: space-between;
    height: 29px;
    background: #363636;
}

.layout-tabs {
    display: flex;
    align-items: flex-start;
    padding-left: 11px;
}

.layout-tabs a,
.layout-tabs button {
    height: 18px;
    padding: 0 11px;
    border-radius: 0 0 10px 10px;
    background: linear-gradient(#484848, #606060);
    clip-path: polygon(0 0, 100% 0, calc(100% - 8px) 100%, 8px 100%);
    color: #b0b0b0;
}

.layout-tabs .current {
    background: linear-gradient(#585858, #888);
    color: #fff;
    font-weight: bold;
}

.status {
    display: flex;
    border: 1px solid #707070;
    background: #505050;
}

.coords {
    width: 154px;
    padding-right: 6px;
    text-align: right;
    line-height: 26px;
}

.space {
    width: 44px;
    border-left: 1px solid #707070;
}

.toggles {
    display: flex;
    align-items: center;
    border-left: 1px solid #707070;
    padding: 0 1px;
}

.toggles button {
    width: 24px;
    height: 26px;
}

.toggles .caret {
    border-width: 4px;
    border-bottom: 0;
    margin: 0 3px;
}

.watermark {
    position: absolute;
    right: 0;
    bottom: 0;
    color: rgba(30, 30, 30, 0.55);
    font-family: "Liberation Sans", Arial, sans-serif;
    font-size: 26px;
    line-height: 28px;
    pointer-events: none;
}
```
